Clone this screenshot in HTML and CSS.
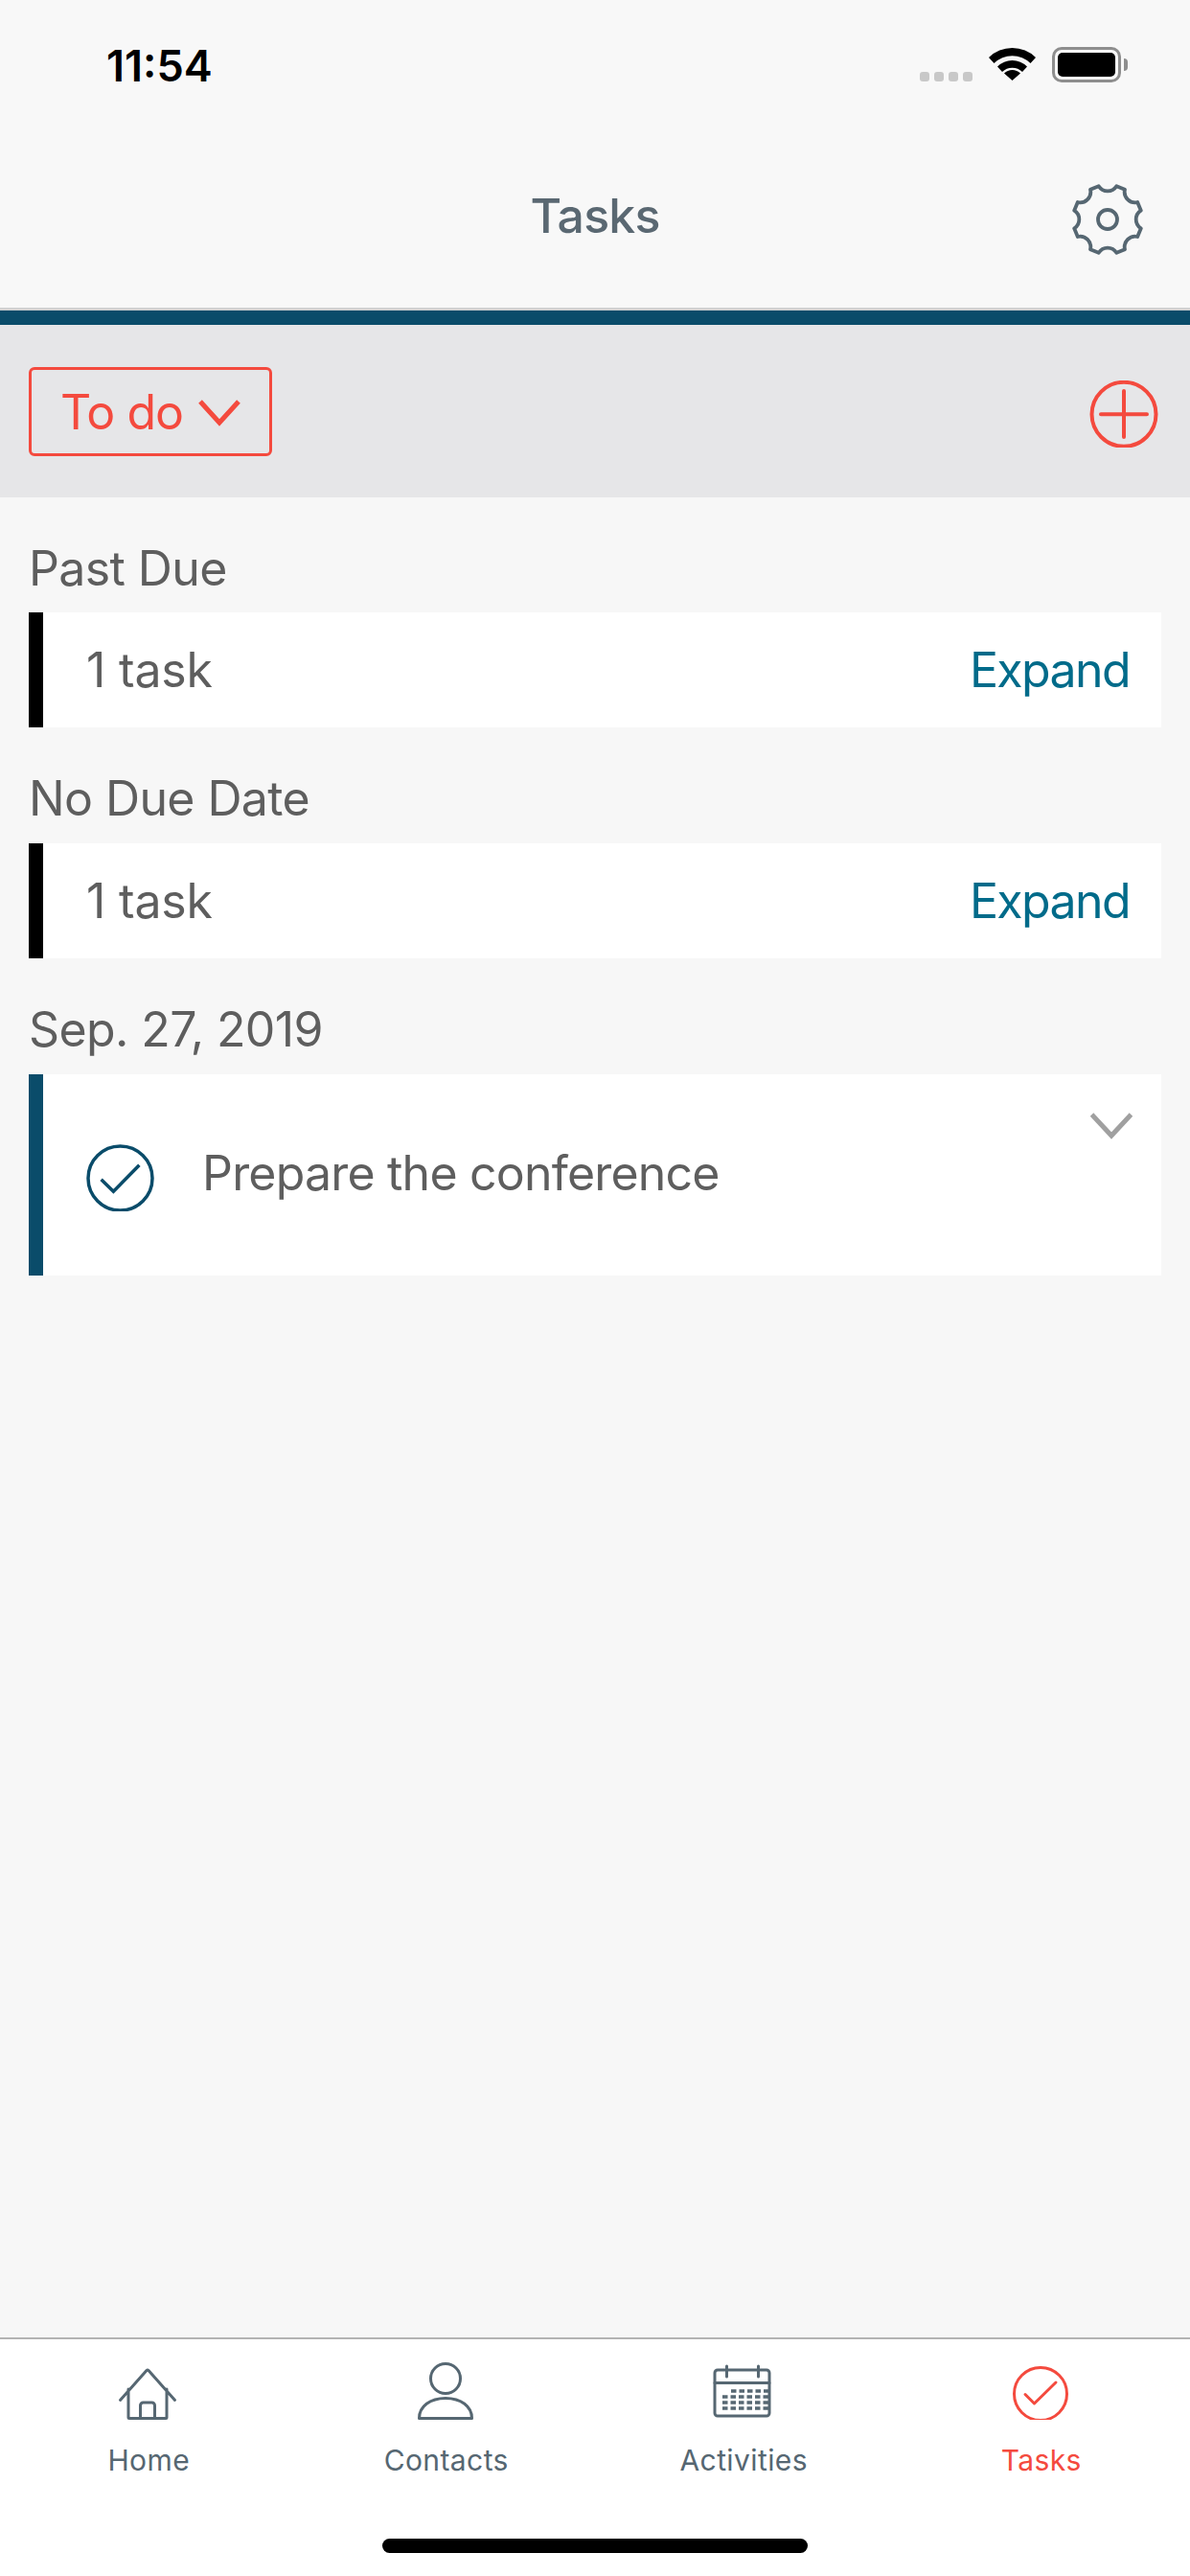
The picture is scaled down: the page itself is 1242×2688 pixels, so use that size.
FILE: index.html
```html
<!DOCTYPE html>
<html lang="en">
<head>
<meta charset="utf-8">
<title>Tasks</title>
<link rel="stylesheet" href="styles.css">
</head>
<body>
<div class="app">
  <header class="header">
    <div class="status">
      <span class="clock">11:54</span>
      <div class="status-icons">
        <div class="signal"><i></i><i></i><i></i><i></i></div>
        <svg class="wifi" viewBox="0 0 49 35" aria-hidden="true">
          <path d="M0 11A35 35 0 0 1 49 11L43.500 17A27 27 0 0 0 5.500 17Z"/>
          <path d="M9 20.500A22 22 0 0 1 40 20.500L35 26A15 15 0 0 0 14 26Z"/>
          <path d="M24.500 35L16 27.500A12 12 0 0 1 33 27.500Z"/>
        </svg>
        <div class="battery"><div class="battery-fill"></div></div>
        <div class="battery-cap"></div>
      </div>
    </div>
    <div class="nav">
      <h1 class="nav-title">Tasks</h1>
      <svg class="gear" viewBox="-40 -40 80 80" aria-hidden="true">
        <path d="M9.300-34.800L18-31.200A11 11 0 0 0 31.200-18L34.800-9.300A11 11 0 0 0 34.800 9.300L31.200 18A11 11 0 0 0 18 31.200L9.300 34.800A11 11 0 0 0-9.300 34.800L-18 31.200A11 11 0 0 0-31.200 18L-34.800 9.300A11 11 0 0 0-34.800-9.300L-31.200-18A11 11 0 0 0-18-31.200L-9.300-34.800A11 11 0 0 0 9.300-34.800Z"/>
        <circle r="10"/>
      </svg>
    </div>
  </header>

  <div class="filter">
    <button class="filter-button" type="button">
      <span>To do</span>
      <svg class="filter-chevron" viewBox="0 0 44 28" aria-hidden="true"><path d="M2 2L22 24L42 2"/></svg>
    </button>
    <svg class="add" viewBox="0 0 76 70" aria-hidden="true">
      <circle cx="37" cy="35.300" r="33.500"/>
      <path d="M37 11V59M13 35.300H61"/>
    </svg>
  </div>

  <main class="list">
    <section class="group">
      <h2 class="group-title">Past Due</h2>
      <div class="row row-summary">
        <span class="row-count">1 task</span>
        <a class="expand">Expand</a>
      </div>
    </section>
    <section class="group">
      <h2 class="group-title">No Due Date</h2>
      <div class="row row-summary">
        <span class="row-count">1 task</span>
        <a class="expand">Expand</a>
      </div>
    </section>
    <section class="group">
      <h2 class="group-title">Sep. 27, 2019</h2>
      <div class="row row-task">
        <svg class="task-check" viewBox="0 0 72 70" aria-hidden="true">
          <circle cx="35.500" cy="35.500" r="33.500"/>
          <path d="M15.600 36.700L28.400 49.300L55.400 21.700"/>
        </svg>
        <span class="row-text">Prepare the conference</span>
        <svg class="task-chevron" viewBox="0 0 44 28" aria-hidden="true"><path d="M1.500 2L22 24L42.500 2"/></svg>
      </div>
    </section>
  </main>

  <nav class="tabs">
    <div class="tab">
      <svg class="tab-icon" viewBox="0 -6 80 61" aria-hidden="true">
        <path d="M11.500 34.500L39 3.500a1.500 1.500 0 0 1 2 0L68.500 34.500M20 23V52.500a1 1 0 0 0 1 1H59a1 1 0 0 0 1-1V23M32.500 53V40a3 3 0 0 1 3-3h9a3 3 0 0 1 3 3V53"/>
      </svg>
      <span class="tab-label">Home</span>
    </div>
    <div class="tab">
      <svg class="tab-icon" viewBox="0 -6 80 61" aria-hidden="true">
        <circle cx="40" cy="12" r="15.500"/>
        <path d="M12.500 53.500C12.500 41 24 32.500 40 32.500S67.500 41 67.500 53.500Z"/>
      </svg>
      <span class="tab-label">Contacts</span>
    </div>
    <div class="tab">
      <svg class="tab-icon" viewBox="0 -6 80 61" aria-hidden="true">
        <rect x="11" y="3" width="57" height="48" rx="3"/>
        <path d="M11 16.500H68M23.500 -1V10M56.500 -1V10"/>
        <path class="cal-dots" d="M28 25H68M19 31H68M19 37H68M19 43H68"/>
      </svg>
      <span class="tab-label">Activities</span>
    </div>
    <div class="tab tab-active">
      <svg class="tab-icon" viewBox="0 -6 80 61" aria-hidden="true">
        <circle cx="40" cy="28" r="27.500"/>
        <path d="M24 28.500L33.500 38L56 16"/>
      </svg>
      <span class="tab-label">Tasks</span>
    </div>
    <div class="home-indicator"></div>
  </nav>
</div>
</body>
</html>
```

FILE: styles.css
```css
* { box-sizing: border-box; }

html, body {
  margin: 0;
  padding: 0;
}

body {
  width: 1242px;
  height: 2688px;
  background: #f7f7f7;
  font-family: Inter, "Liberation Sans", sans-serif;
  overflow: hidden;
}

.app {
  display: flex;
  flex-direction: column;
  height: 2688px;
}

/* Header: status bar, title bar and the navy rule */
.header {
  height: 339px;
  flex: none;
  background: #f8f8f8;
  border-bottom: 15px solid #0a4c6a;
  position: relative;
}

.header::after {
  content: "";
  position: absolute;
  left: 0;
  right: 0;
  bottom: 0;
  height: 3px;
  background: #d2d2d2;
}

.status {
  height: 135px;
  display: flex;
  justify-content: space-between;
  align-items: flex-start;
  padding: 40px 65px 0 111px;
}

.clock {
  font-size: 45px;
  font-weight: 600;
  line-height: 58px;
  color: #000;
}

.status-icons {
  display: flex;
  align-items: flex-start;
  padding-top: 9px;
}

.signal {
  display: flex;
  gap: 5px;
  margin-top: 26px;
  margin-right: 17px;
}

.signal i {
  width: 10px;
  height: 10px;
  border-radius: 3px;
  background: #c8c8c8;
}

.wifi {
  width: 49px;
  height: 35px;
  fill: #000;
  margin-right: 17px;
}

.battery {
  width: 72px;
  height: 37px;
  border: 3px solid #8e8e8e;
  border-radius: 10px;
  padding: 3px;
}

.battery-fill {
  height: 100%;
  background: #000;
  border-radius: 5px;
}

.battery-cap {
  width: 4px;
  height: 13px;
  margin: 12px 0 0 3px;
  background: #8e8e8e;
  border-radius: 0 4px 4px 0;
}

.nav {
  height: 168px;
  display: flex;
  align-items: center;
  justify-content: flex-end;
  position: relative;
  padding-right: 46px;
}

.nav-title {
  position: absolute;
  left: 0;
  right: 0;
  top: 54px;
  margin: 0;
  text-align: center;
  font-size: 50px;
  font-weight: 500;
  line-height: 72px;
  letter-spacing: -0.8px;
  color: #5a6872;
}

.gear {
  width: 80px;
  height: 80px;
  margin-top: 20px;
  fill: none;
  stroke: #566772;
  stroke-width: 3.800;
  stroke-linejoin: round;
}

/* Filter strip */
.filter {
  height: 180px;
  flex: none;
  background: #e6e6e8;
  display: flex;
  align-items: flex-start;
  justify-content: space-between;
  padding: 44px 30px 0 30px;
}

.filter-button {
  width: 254px;
  height: 93px;
  display: flex;
  align-items: center;
  gap: 16px;
  padding: 0 0 0 30px;
  background: transparent;
  border: 3px solid #f44a3e;
  border-radius: 6px;
  font-family: inherit;
  font-size: 50px;
  line-height: 1;
  letter-spacing: -1px;
  color: #f44a3e;
}

.filter-chevron {
  width: 44px;
  height: 28px;
  margin-top: 2px;
  fill: none;
  stroke: #f44a3e;
  stroke-width: 5;
}

.add {
  width: 76px;
  height: 70px;
  margin-top: 14px;
  fill: none;
  stroke: #f44a3e;
  stroke-width: 4;
  stroke-linecap: round;
}

/* Task groups */
.list {
  flex: 1;
  padding: 0 30px;
}

.group-title {
  margin: 0;
  height: 120px;
  padding-top: 44px;
  font-size: 50px;
  font-weight: 400;
  line-height: 60px;
  letter-spacing: -0.6px;
  color: #5e5e5e;
}

.group + .group .group-title {
  height: 121px;
}

.row {
  position: relative;
  display: flex;
  width: 1182px;
  background: #fff;
  border-left: 15px solid #000;
}

.row-summary {
  height: 120px;
  align-items: center;
  justify-content: space-between;
  padding: 0 33px 0 45px;
}

.row-task {
  height: 210px;
  align-items: flex-start;
  border-left-color: #0a4c6a;
  padding: 73px 0 0 45px;
}

.row-count,
.row-text {
  font-size: 50px;
  line-height: 60px;
  letter-spacing: -0.8px;
  color: #5e5e5e;
}

.row-count {
  letter-spacing: -0.2px;
}

.expand {
  font-size: 50px;
  line-height: 60px;
  letter-spacing: -1.6px;
  color: #006b8a;
}

.task-check {
  width: 72px;
  height: 70px;
  flex: none;
  margin-right: 49px;
  fill: none;
  stroke: #0a4c6a;
  stroke-width: 3.500;
}

.task-chevron {
  position: absolute;
  right: 30px;
  top: 40px;
  width: 44px;
  height: 28px;
  fill: none;
  stroke: #a0a0a0;
  stroke-width: 5;
}

/* Bottom tab bar */
.tabs {
  position: relative;
  height: 249px;
  flex: none;
  display: grid;
  grid-template-columns: repeat(4, 310.500px);
  background: #fff;
  border-top: 2px solid #b4b4b4;
  padding-top: 23px;
}

.tab {
  display: flex;
  flex-direction: column;
  align-items: center;
  color: #566772;
}

.tab-icon {
  width: 80px;
  height: 61px;
  margin-left: -2px;
  fill: none;
  stroke: #566772;
  stroke-width: 3;
  stroke-linecap: round;
  stroke-linejoin: round;
}

.tab-icon .cal-dots {
  stroke-width: 3.500;
  stroke-linecap: butt;
  stroke-dasharray: 5.500 3;
}

.tab-label {
  margin-top: 23px;
  font-size: 30px;
  line-height: 38px;
  letter-spacing: 0.4px;
}

.tab-active {
  color: #f44a3e;
}

.tab-active .tab-icon {
  stroke: #f44a3e;
}

.home-indicator {
  position: absolute;
  left: 399px;
  top: 208px;
  width: 444px;
  height: 15px;
  border-radius: 8px;
  background: #000;
}
```
